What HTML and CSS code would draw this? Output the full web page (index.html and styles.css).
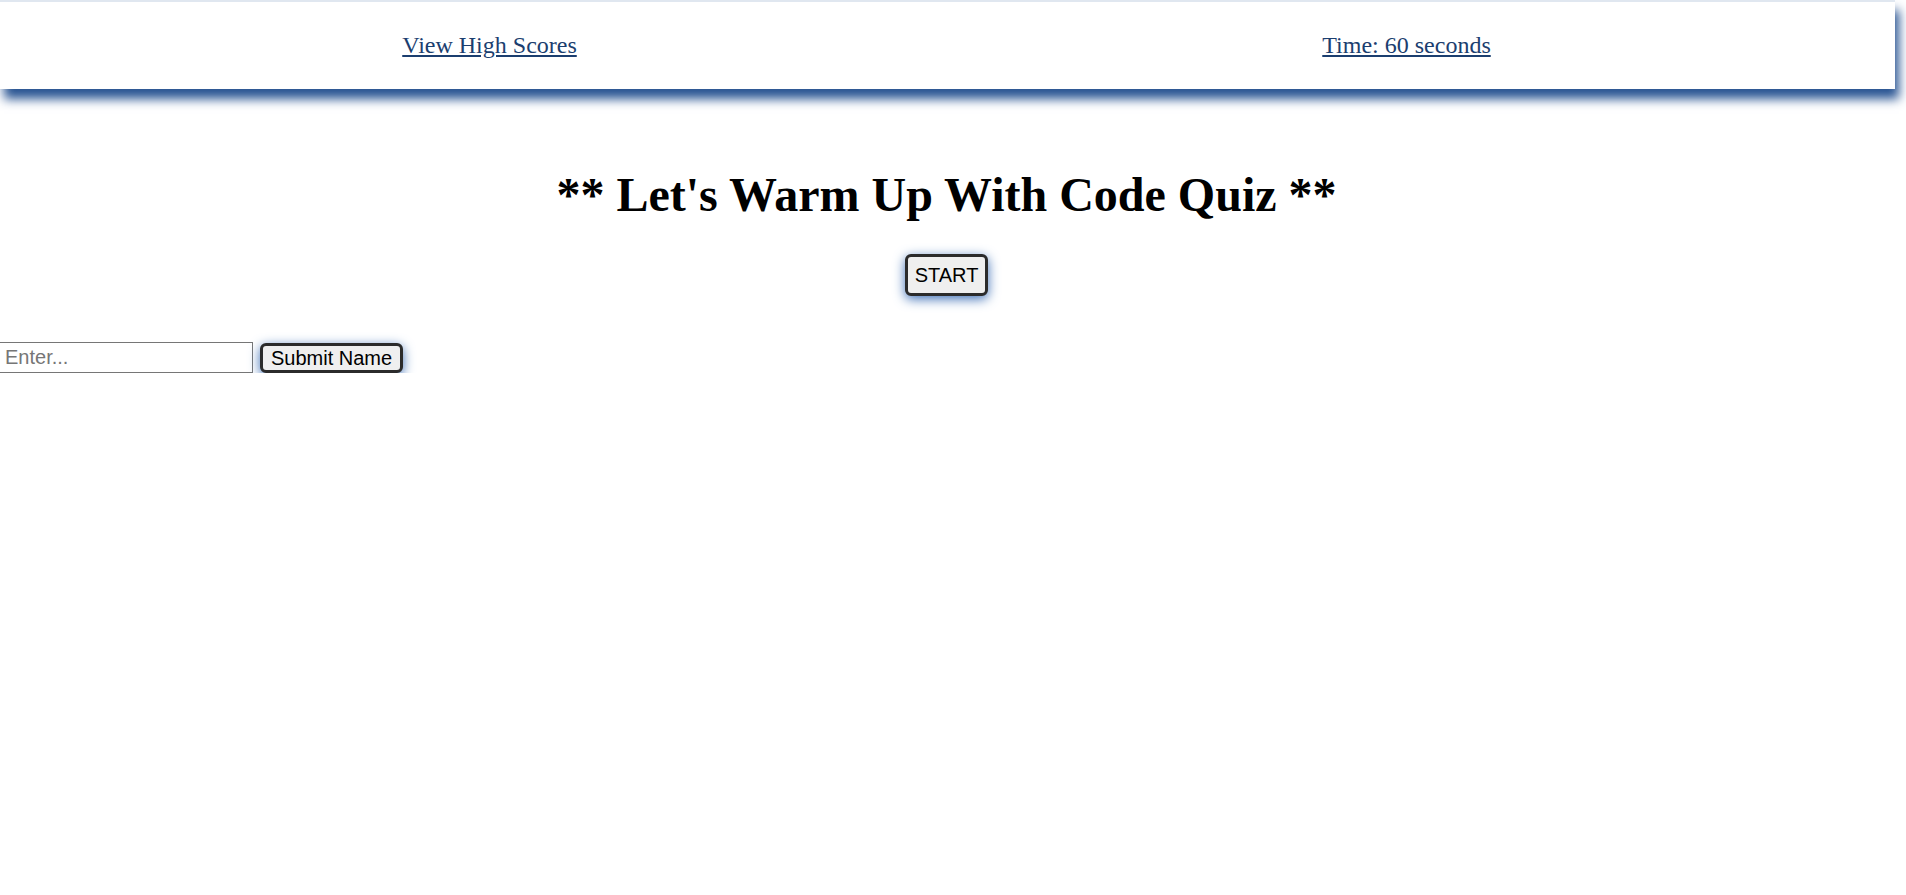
FILE: index.html
```html
<!DOCTYPE html>
<html lang="en">
<head>
<meta charset="utf-8">
<title>Code Quiz</title>
<link rel="stylesheet" href="styles.css">
</head>
<body>
  <header class="topbar">
    <div class="topbar-cell"><a class="topbar-link" href="#">View High Scores</a></div>
    <div class="topbar-cell"><a class="topbar-link" href="#">Time: 60 seconds</a></div>
  </header>
  <main class="quiz">
    <h1 class="quiz-title">** Let's Warm Up With Code Quiz **</h1>
    <div class="start-row">
      <button class="btn btn-start" type="button">START</button>
    </div>
  </main>
  <form class="name-form">
    <input class="name-input" type="text" placeholder="Enter...">
    <button class="btn btn-submit" type="button">Submit Name</button>
  </form>
</body>
</html>
```

FILE: styles.css
```css
html, body {
  margin: 0;
  padding: 0;
  background: #ffffff;
}

body {
  font-family: "Liberation Serif", "Times New Roman", serif;
  color: #000;
}

.topbar {
  display: grid;
  grid-template-columns: 1fr 1fr;
  align-items: center;
  height: 87px;
  margin-right: 11px;
  padding: 0 30px 0 31px;
  background: #ffffff;
  border-top: 2px solid #e0e7f0;
  box-shadow: 4px 10px 10px #2a5593;
}

.topbar-cell {
  text-align: center;
}

.topbar-link {
  font-size: 24px;
  color: #1b3e6f;
  text-decoration: underline;
}

.quiz {
  margin-right: 13px;
  text-align: center;
}

.quiz-title {
  margin: 78px 0 0;
  font-size: 48px;
  font-weight: bold;
  line-height: 55px;
}

.start-row {
  margin-top: 32px;
}

.btn {
  font-family: "Liberation Sans", Arial, sans-serif;
  font-size: 20px;
  color: #000;
  background: #efefef;
  border: 3px solid #2b2b2b;
  border-radius: 6px;
  box-shadow: 0 3px 12px #3f70b6;
  cursor: pointer;
}

.btn-start {
  height: 42px;
  padding: 0 7px;
}

.name-form {
  display: flex;
  align-items: center;
  gap: 7px;
  margin-top: 46px;
  margin-left: -2px;
}

.name-input {
  box-sizing: border-box;
  width: 255px;
  height: 31px;
  padding: 1px 6px;
  font-family: "Liberation Sans", Arial, sans-serif;
  font-size: 20px;
  border: 1px solid #767676;
  border-radius: 0;
}

.name-input::placeholder {
  color: #767676;
}

.btn-submit {
  height: 30px;
  padding: 0 8px;
  line-height: 1;
}
```
